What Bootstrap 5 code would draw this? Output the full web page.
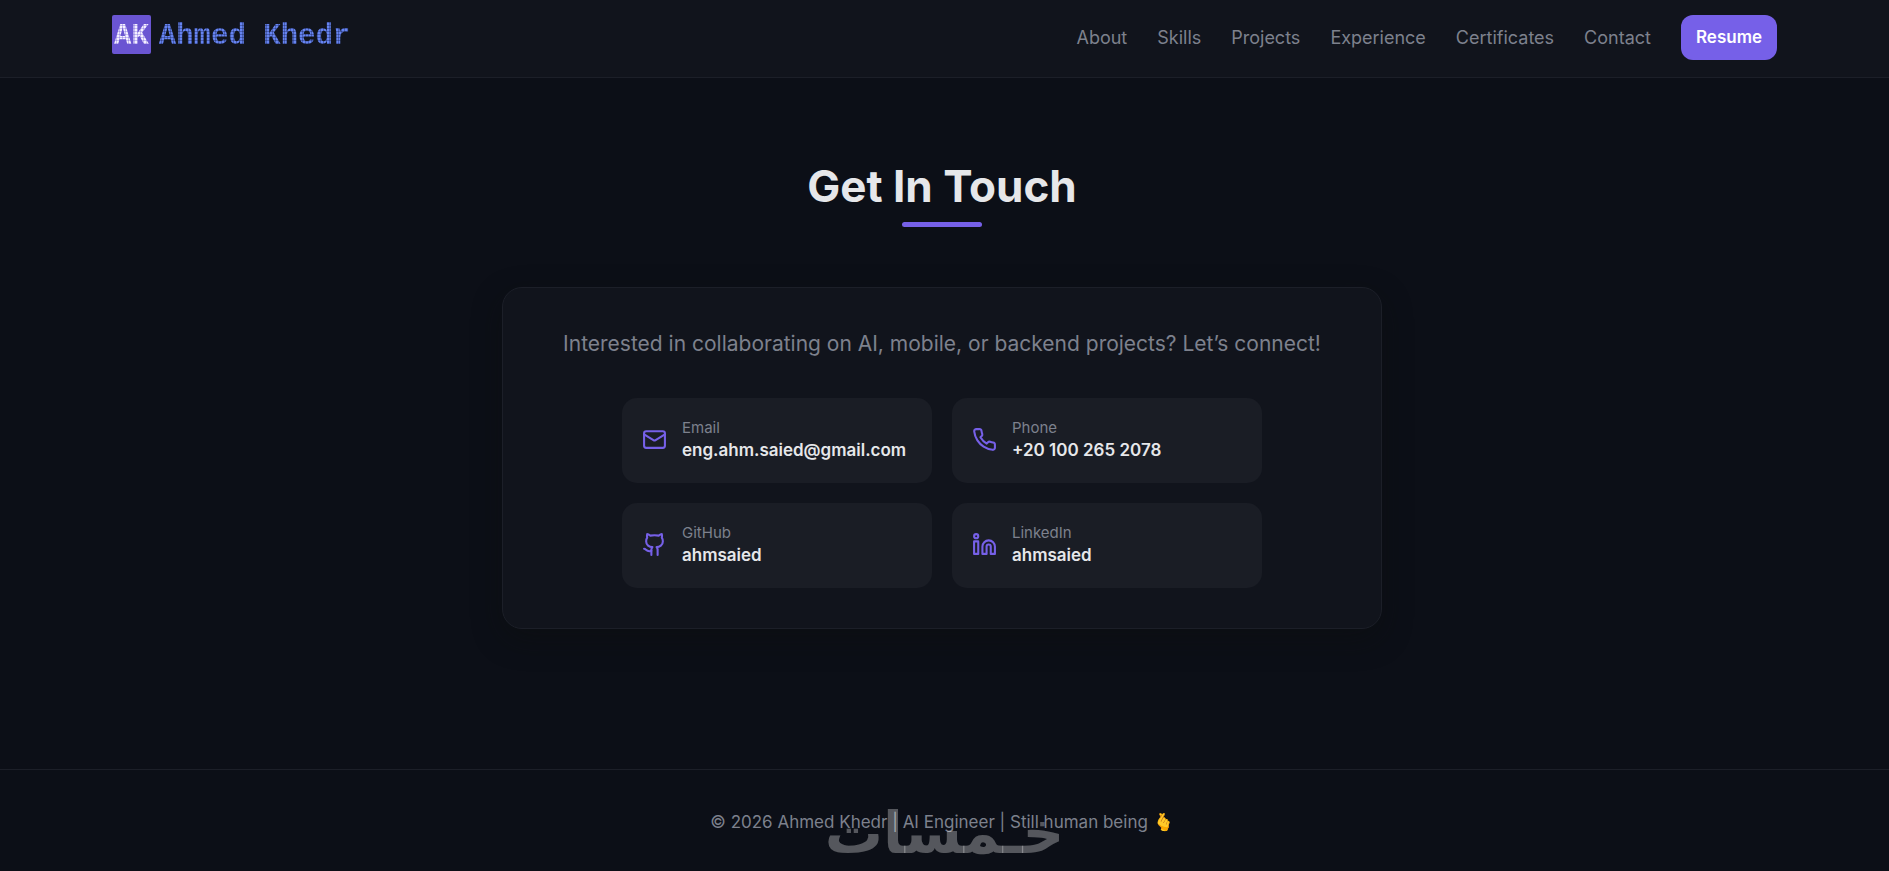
<!DOCTYPE html>
<html lang="en" data-bs-theme="dark">
<head>
<meta charset="utf-8">
<meta name="viewport" content="width=device-width, initial-scale=1">
<title>Ahmed Khedr | Contact</title>
<link href="https://cdn.jsdelivr.net/npm/bootstrap@5.3.0/dist/css/bootstrap.min.css" rel="stylesheet">
<style>
  :root { --page: #0c0f17; --surface: #11141c; --tile: #1a1d25; --line: #1c1f28; --muted: #7d818d; --bright: #e6e7ea; --accent: #7660e8; }
  body { background: var(--page); color: var(--muted); font-family: Inter, "Liberation Sans", sans-serif; font-size: 17px; line-height: 27px; }
  a { text-decoration: none; }
  .topbar { background: var(--surface); border-bottom: 1px solid var(--line); padding: 15px 112px 17px; }
  .brand { font-family: "Liberation Mono", monospace; font-weight: 700; font-size: 29px; line-height: 35px; gap: 8px; }
  .brand-mark { background: #6a55d2; border-radius: 2px; padding: 4px 2px 0; }
  .brand-name { padding-top: 4px; }
  .dots { color: transparent; -webkit-background-clip: text; background-clip: text; background-size: 3px 3px; }
  .dots-light { background-image: radial-gradient(circle at 1px 1px, #f4f0ff 1px, #a596e8 2px); }
  .dots-blue { background-image: radial-gradient(circle at 1px 1px, #6684f0 1px, #34468f 2px); }
  .menu { gap: 30px; font-size: 18px; }
  .menu a { color: var(--muted); }
  .menu .btn-resume { background: var(--accent); color: #fff; font-size: 17px; font-weight: 600; border-radius: 12px; padding: 9px 15px; }
  main { padding: 79px 25px 140px 20px; }
  .title { color: var(--bright); font-weight: 700; font-size: 44px; line-height: 58px; }
  .title-bar { width: 80px; height: 5px; border-radius: 3px; background: var(--accent); margin: 7px auto 60px; }
  .panel { max-width: 880px; background: var(--surface); border: 1px solid var(--line); border-radius: 20px; padding: 40px; box-shadow: 0 10px 30px rgba(12,14,12,.4); }
  .intro { font-size: 21px; line-height: 32px; margin-bottom: 38px; }
  .tiles { display: grid; grid-template-columns: repeat(auto-fit, minmax(280px, 1fr)); gap: 20px; max-width: 640px; }
  .tile { background: var(--tile); border-radius: 15px; padding: 19px 20px 21px; gap: 15px; color: var(--bright); }
  .tile svg { width: 25px; height: 25px; color: var(--accent); }
  .tile-label { font-size: 15px; line-height: 22px; color: var(--muted); }
  .tile-value { font-weight: 600; line-height: 23px; }
  footer { border-top: 1px solid var(--line); padding: 39px 25px 35px 20px; }
  .watermark { left: 50%; bottom: 8px; transform: translateX(-50%); font: 700 58px/60px "DejaVu Sans", sans-serif; color: rgba(255,255,255,.3); pointer-events: none; }
</style>
</head>
<body>
<header class="topbar d-flex flex-wrap justify-content-between align-items-start">
  <a class="brand d-flex" href="#" aria-label="Ahmed Khedr"><span class="brand-mark"><span class="dots dots-light">AK</span></span><span class="brand-name"><span class="dots dots-blue">Ahmed Khedr</span></span></a>
  <nav class="menu d-flex flex-wrap align-items-center">
    <a href="#about">About</a>
    <a href="#skills">Skills</a>
    <a href="#projects">Projects</a>
    <a href="#experience">Experience</a>
    <a href="#certificates">Certificates</a>
    <a href="#contact">Contact</a>
    <a class="btn-resume" href="#resume">Resume</a>
  </nav>
</header>
<main id="contact">
  <h2 class="title text-center mb-0">Get In Touch</h2>
  <div class="title-bar"></div>
  <section class="panel mx-auto">
    <p class="intro text-center">Interested in collaborating on AI, mobile, or backend projects? Let’s connect!</p>
    <div class="tiles mx-auto">
      <a class="tile d-flex align-items-center" href="mailto:eng.ahm.saied@gmail.com">
        <svg class="flex-shrink-0" viewBox="0 0 24 24" fill="none" stroke="currentColor" stroke-width="2" stroke-linecap="round" stroke-linejoin="round"><rect x="2" y="4" width="20" height="16" rx="2"/><path d="M22 7l-8.970 5.700a1.940 1.940 0 0 1-2.060 0L2 7"/></svg>
        <span><span class="tile-label d-block">Email</span><span class="tile-value d-block">eng.ahm.saied@gmail.com</span></span>
      </a>
      <a class="tile d-flex align-items-center" href="tel:+201002652078">
        <svg class="flex-shrink-0" viewBox="0 0 24 24" fill="none" stroke="currentColor" stroke-width="2" stroke-linecap="round" stroke-linejoin="round"><path d="M22 16.920v3a2 2 0 0 1-2.180 2 19.790 19.790 0 0 1-8.630-3.070 19.500 19.500 0 0 1-6-6 19.790 19.790 0 0 1-3.070-8.670A2 2 0 0 1 4.110 2h3a2 2 0 0 1 2 1.720 12.840 12.840 0 0 0 .7 2.810 2 2 0 0 1-.45 2.110L8.090 9.910a16 16 0 0 0 6 6l1.270-1.270a2 2 0 0 1 2.110-.45 12.840 12.840 0 0 0 2.810.7A2 2 0 0 1 22 16.920z"/></svg>
        <span><span class="tile-label d-block">Phone</span><span class="tile-value d-block">+20 100 265 2078</span></span>
      </a>
      <a class="tile d-flex align-items-center" href="#github">
        <svg class="flex-shrink-0" viewBox="0 0 24 24" fill="none" stroke="currentColor" stroke-width="2" stroke-linecap="round" stroke-linejoin="round"><path d="M15 22v-4a4.800 4.800 0 0 0-1-3.500c3 0 6-2 6-5.500.08-1.250-.27-2.480-1-3.500.28-1.150.28-2.350 0-3.500 0 0-1 0-3 1.500-2.640-.5-5.360-.5-8 0C6 2 5 2 5 2c-.3 1.150-.3 2.350 0 3.500A5.403 5.403 0 0 0 4 9c0 3.500 3 5.500 6 5.500-.39.49-.68 1.050-.85 1.650-.17.6-.22 1.230-.15 1.850v4"/><path d="M9 18c-4.510 2-5-2-7-2"/></svg>
        <span><span class="tile-label d-block">GitHub</span><span class="tile-value d-block">ahmsaied</span></span>
      </a>
      <a class="tile d-flex align-items-center" href="#linkedin">
        <svg class="flex-shrink-0" viewBox="0 0 24 24" fill="none" stroke="currentColor" stroke-width="2" stroke-linecap="round" stroke-linejoin="round"><path d="M16 8a6 6 0 0 1 6 6v7h-4v-7a2 2 0 0 0-4 0v7h-4v-7a6 6 0 0 1 6-6z"/><rect x="2" y="9" width="4" height="12"/><circle cx="4" cy="4" r="2"/></svg>
        <span><span class="tile-label d-block">LinkedIn</span><span class="tile-value d-block">ahmsaied</span></span>
      </a>
    </div>
  </section>
</main>
<footer class="position-relative text-center">
  <p class="mb-0">© 2026 Ahmed Khedr | AI Engineer | Still human being 🫰</p>
  <div class="watermark position-absolute" lang="ar" dir="rtl">خـمسات</div>
</footer>
<script src="https://cdn.jsdelivr.net/npm/bootstrap@5.3.0/dist/js/bootstrap.bundle.min.js"></script>
</body>
</html>
